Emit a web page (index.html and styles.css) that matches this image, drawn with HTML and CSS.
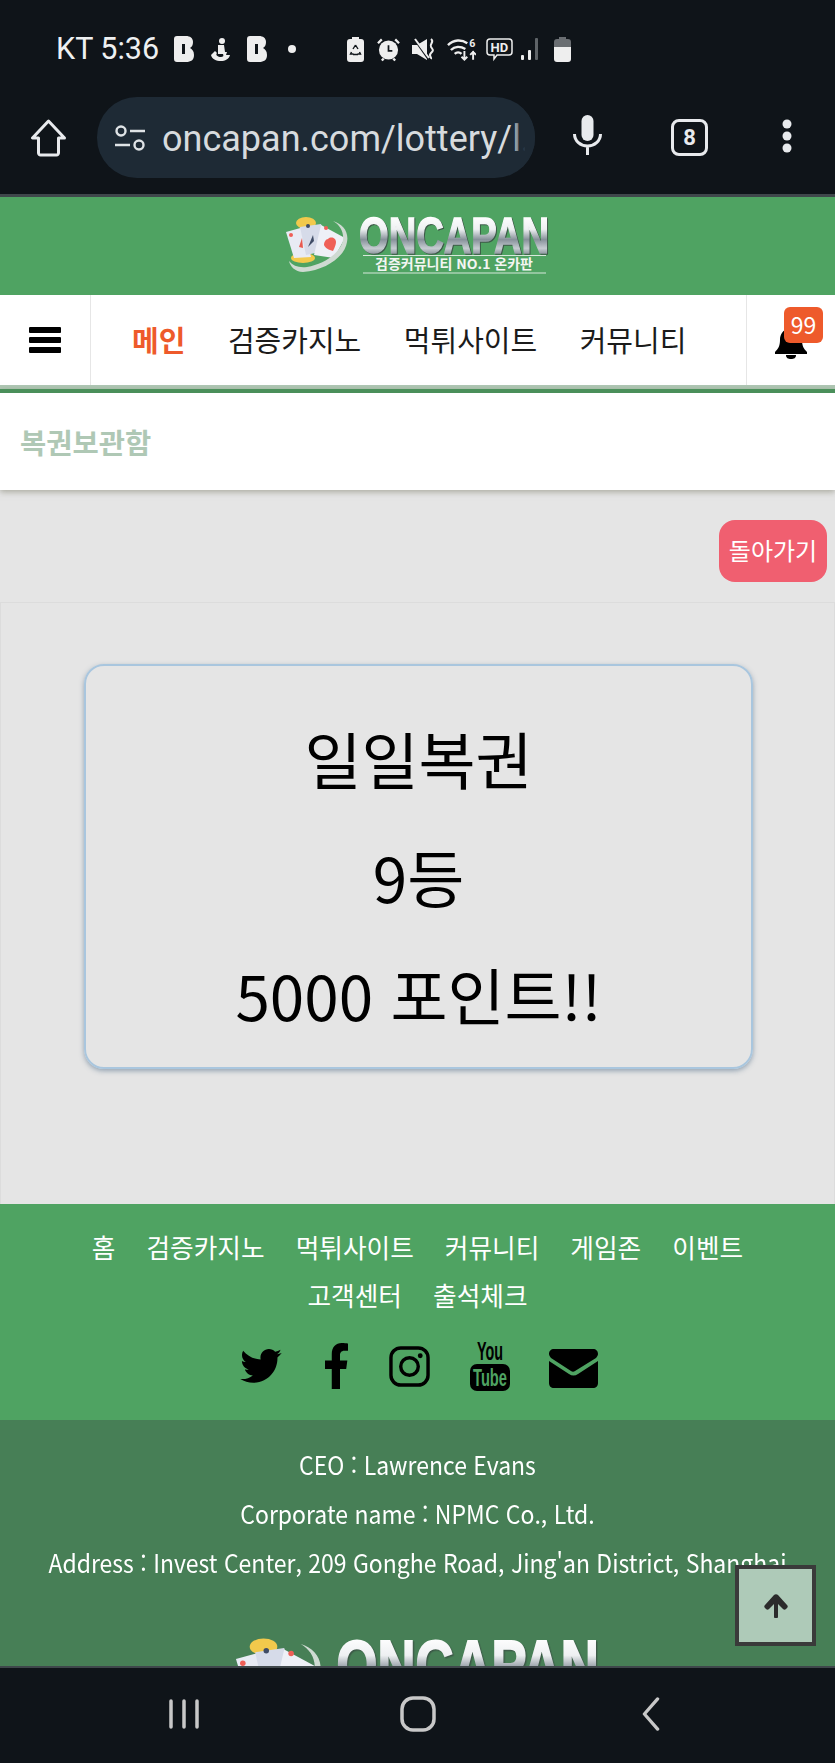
FILE: index.html
```html
<!DOCTYPE html>
<html lang="ko">
<head>
<meta charset="utf-8">
<title>복권보관함</title>
<link rel="stylesheet" href="styles.css">
</head>
<body>
<div class="screen">
  <header class="chrome">
    <div class="status">
      <span class="carrier">KT 5:36</span>
      <span class="notif">
        <svg class="b" viewBox="0 0 20 26"><path fill-rule="evenodd" d="M3 0h9c4 0 7 2 7 6 0 3-1 5-3 6 2 1 4 3 4 7 0 5-3 7-8 7H3c-2 0-3-1-3-3V3c0-2 1-3 3-3zM8 8v10h3V8z"/></svg>
        <svg class="person" viewBox="0 0 21 23"><circle cx="12" cy="3" r="3"/><path d="M8 7h6l1 7h2l-1 3 4 0c-1 4-5 6-9 6-5 0-9-2-10-6l4-4 2 2c-2 2 1 4 4 4 2 0 3-1 2-3H8z"/></svg>
        <svg class="b" viewBox="0 0 20 26"><path fill-rule="evenodd" d="M3 0h9c4 0 7 2 7 6 0 3-1 5-3 6 2 1 4 3 4 7 0 5-3 7-8 7H3c-2 0-3-1-3-3V3c0-2 1-3 3-3zM8 8v10h3V8z"/></svg>
        <i class="dot"></i>
      </span>
      <span class="sysicons">
        <svg width="17" height="25" viewBox="0 0 17 25"><path fill="#eee" d="M5 0h7v2h2c2 0 3 1 3 3v17c0 2-1 3-3 3H3c-2 0-3-1-3-3V5c0-2 1-3 3-3h2z"/><path fill="none" stroke="#10151a" stroke-width="1.400" d="M8.500 8l-2.500 4M8.500 8l2.500 4M4.500 15l-1 2h3M12.500 15l1 2h-3M6 17.500h5"/></svg>
        <svg class="ic-alarm" width="23" height="25" viewBox="0 0 24 25"><circle cx="12" cy="13" r="10" fill="#eee"/><path fill="none" stroke="#10151a" stroke-width="1.800" d="M12 8v6h4"/><path stroke="#eee" stroke-width="2.400" d="M1 6l4-4M23 6l-4-4M5 24l2-2M19 24l-2-2"/></svg>
        <svg width="23" height="25" viewBox="0 0 23 25"><path fill="#eee" d="M0 8h5l10-6v21L5 17H0z"/><path stroke="#10151a" stroke-width="1.500" d="M2 2l14 20"/><path stroke="#eee" stroke-width="2" d="M3 2l14 19"/><path fill="none" stroke="#eee" stroke-width="2" d="M19 2c4 3-2 5 0 8s3 3 0 6 1 4 0 6"/></svg>
        <svg width="29" height="25" viewBox="0 0 30 25"><path fill="none" stroke="#eee" stroke-width="2.500" d="M1 8c6-6 14-6 20-2M4 13c4-4 10-4 15-1M8 17c2-2 5-2 7 0"/><path fill="none" stroke="#eee" stroke-width="2" d="M18 14v9m-3-3 3 3 3-3M27 14v9m-3-5 3-3 3 3"/><text x="23" y="10" class="six">6</text></svg>
        <svg class="ic-hd" width="27" height="25" viewBox="0 0 27 25"><path fill="none" stroke="#eee" stroke-width="1.500" d="M4 2h19c2 0 3 1 3 3v10c0 2-1 3-3 3H11l-3 4v-4H4c-2 0-3-1-3-3V5c0-2 1-3 3-3z"/><text x="4.500" y="15" class="hd">HD</text></svg>
        <svg class="ic-bars" width="22" height="25" viewBox="0 0 22 25"><rect x="1" y="18" width="3" height="5" rx="1" fill="#eee"/><rect x="8" y="13" width="3" height="10" rx="1" fill="#eee"/><rect x="15" y="1" width="3" height="22" rx="1" fill="#5f6468"/></svg>
        <svg width="17" height="25" viewBox="0 0 17 25"><path fill="#6a6e72" d="M5 0h7v2h2c2 0 3 1 3 3v5H0V5c0-2 1-3 3-3h2z"/><path fill="#eee" d="M0 10h17v12c0 2-1 3-3 3H3c-2 0-3-1-3-3z"/></svg>
      </span>
    </div>
    <div class="toolbar">
      <svg class="home" viewBox="0 0 36 38"><path fill="none" stroke="#e8eaed" stroke-width="3" stroke-linejoin="round" d="M18 2 2 19h6v15c0 1 1 2 2 2h16c1 0 2-1 2-2V19h6z"/></svg>
      <div class="omnibox">
        <svg class="tune" viewBox="0 0 32 26"><g fill="none" stroke="#dfe3e6" stroke-width="2.400"><circle cx="7" cy="6" r="4.500"/><path d="M16 6h15M1 20h15"/><circle cx="25" cy="20" r="4.500"/></g></svg>
        <span class="url">oncapan.com/lottery/l.</span><span class="fade"></span>
      </div>
      <svg class="mic" viewBox="0 0 30 40"><rect x="9" y="0" width="12" height="26" rx="6" fill="#e8eaed"/><path fill="none" stroke="#e8eaed" stroke-width="3" d="M2 19c0 7 6 12 13 12s13-5 13-12M15 31v9"/></svg>
      <div class="tabs">8</div>
      <svg class="more" viewBox="0 0 10 34"><circle cx="5" cy="5" r="4.500"/><circle cx="5" cy="17" r="4.500"/><circle cx="5" cy="29" r="4.500"/></svg>
    </div>
  </header>

  <div class="page">
    <div class="site-head">
      <svg class="logo" viewBox="0 0 270 58">
        <defs><linearGradient id="chrome1" gradientUnits="userSpaceOnUse" x1="0" y1="0" x2="0" y2="38"><stop offset="0" stop-color="#fff"/><stop offset=".35" stop-color="#eef0f2"/><stop offset=".62" stop-color="#87919a"/><stop offset=".85" stop-color="#c6ccd1"/><stop offset="1" stop-color="#8d979e"/></linearGradient></defs>
        <ellipse cx="23" cy="7" rx="10" ry="6" fill="#f2c94c"/>
        <ellipse cx="20" cy="42" rx="12" ry="5" fill="#f2c94c"/>
        <path fill="#e8ebf4" d="M3 16 21 11l7 30-17 1z"/>
        <path fill="#d6dbe9" d="M17 11 38 8l8 26-23 5z"/>
        <path fill="#eef0f7" d="M38 9 62 22 51 42 31 39z"/>
        <path fill="#ef5f57" d="M45 23c3-3 8-1 8 3 0 2-1 5-3 9-4-1-8-3-9-6 0-3 2-6 4-6z"/>
        <path fill="#3f4c66" d="M30 19 25 31l6-6z"/>
        <path fill="#e85a50" d="M19 22l-3 9 4 1z"/>
        <circle cx="25" cy="10" r="2" fill="#3f4c66"/><circle cx="43" cy="12" r="2" fill="#ef5f57"/><circle cx="8" cy="19" r="2" fill="#ef5f57"/>
        <path fill="#cfdad2" d="M50 5C60 8 66 16 64 26 62 40 44 54 20 56 12 56 7 50 6 45 10 50 16 52 24 51 42 48 58 36 60 24 61 16 57 9 50 5z"/>
        <text class="logo-name" x="76" y="37" textLength="190" lengthAdjust="spacingAndGlyphs" fill="url(#chrome1)" stroke="url(#chrome1)">ONCAPAN</text>
        <path stroke="#d7e8db" stroke-width="1" d="M80 39.500h183M80 57h183"/>
        <text class="logo-sub" x="92" y="53" textLength="158" lengthAdjust="spacingAndGlyphs">검증커뮤니티 NO.1 온카판</text>
      </svg>
    </div>
    <nav class="gnb">
      <div class="gnb-menu"><svg width="32" height="26" viewBox="0 0 32 26"><path fill="#000" d="M1 0h30c1 0 1 1 1 1v4c0 1-1 1-1 1H1C0 6 0 5 0 5V1c0-1 1-1 1-1zm0 10h30c1 0 1 1 1 1v4c0 1-1 1-1 1H1c-1 0-1-1-1-1v-4c0-1 1-1 1-1zm0 10h30c1 0 1 1 1 1v4c0 1-1 1-1 1H1c-1 0-1-1-1-1v-4c0-1 1-1 1-1z"/></svg></div>
      <ul class="gnb-list">
        <li class="active">메인</li>
        <li>검증카지노</li>
        <li>먹튀사이트</li>
        <li>커뮤니티</li>
      </ul>
      <div class="gnb-bell">
        <svg width="34" height="34" viewBox="0 0 34 34"><path d="M17 1c2 0 3 1 3 3 5 1 8 5 8 11 0 6 2 9 5 12v2H1v-2c3-3 5-6 5-12 0-6 3-10 8-11 0-2 1-3 3-3z"/><path d="M12 30c0 3 2 4 5 4s5-1 5-4z"/></svg>
        <span class="badge">99</span>
      </div>
    </nav>
    <div class="title-bar">복권보관함</div>
    <div class="actions"><a class="back">돌아가기</a></div>
    <section class="panel">
      <div class="card">
        <p>일일복권</p>
        <p>9등</p>
        <p>5000 포인트!!</p>
      </div>
    </section>
    <footer>
      <div class="foot-links">
        <ul class="foot-nav">
          <li>홈</li><li>검증카지노</li><li>먹튀사이트</li><li>커뮤니티</li><li>게임존</li><li>이벤트</li><li>고객센터</li><li>출석체크</li>
        </ul>
        <div class="social">
          <svg class="s-tw" viewBox="0 0 512 420"><path d="M459 105c.3 4.500.3 9.100.3 13.600 0 138.700-105.600 298.600-298.600 298.600-59.500 0-114.700-17.200-161.100-47.100 8.400 1 16.600 1.300 25.300 1.300 49.100 0 94.200-16.600 130.300-44.800-46.100-1-84.800-31.200-98.100-72.800 6.500 1 13 1.600 19.800 1.600 9.400 0 18.800-1.300 27.600-3.600-48.100-9.700-84.100-52-84.100-103v-1.300c14 7.800 30.200 12.700 47.400 13.300-28.300-18.800-46.800-51-46.800-87.400 0-19.500 5.200-37.400 14.300-53 51.700 63.700 129.300 105.300 216.400 109.800-1.600-7.800-2.600-15.900-2.600-24 0-57.800 46.800-104.900 104.900-104.900 30.200 0 57.500 12.700 76.700 33.100 23.700-4.500 46.500-13.300 66.600-25.300-7.800 24-24.400 44.200-46.100 57.200 21.100-2.300 41.600-8.100 60.400-16.200-14.300 20.800-32.200 39.300-52.600 54.300z"/></svg>
          <svg class="s-fb" viewBox="22 0 279 512" preserveAspectRatio="none"><path d="M279 288l14-93h-89v-60c0-25 13-50 53-50h44V6S260 0 225 0c-73 0-121 44-121 125v70H22v93h82v224h100V288z"/></svg>
          <svg class="s-ig" viewBox="0 0 42 42"><rect x="2" y="2" width="38" height="38" rx="10" fill="none" stroke="#000" stroke-width="3.500"/><circle cx="21" cy="21" r="9" fill="none" stroke="#000" stroke-width="3.500"/><circle cx="32" cy="10" r="2.500"/></svg>
          <svg class="s-yt" viewBox="0 0 40 49">
            <text x="7" y="18" textLength="26" lengthAdjust="spacingAndGlyphs" class="yt-you">You</text>
            <rect x="0" y="22" width="40" height="27" rx="7"/>
            <text x="3" y="44" textLength="34" lengthAdjust="spacingAndGlyphs" class="yt-tube">Tube</text>
          </svg>
          <svg class="s-mail" viewBox="0 0 49 39"><path d="M5 0h39c3 0 5 2 5 5 0 1-1 3-2 4L26 22c-1 1-3 1-4 0L2 9C1 8 0 6 0 5c0-3 2-5 5-5z"/><path d="M0 12l20 13c3 2 6 2 9 0l20-13v22c0 3-2 5-5 5H5c-3 0-5-2-5-5z"/></svg>
        </div>
      </div>
      <div class="foot-info">
        <p>CEO : Lawrence Evans</p>
        <p>Corporate name : NPMC Co., Ltd.</p>
        <p>Address : Invest Center, 209 Gonghe Road, Jing'an District, Shanghai</p>
        <svg class="logo foot-logo" viewBox="0 0 270 58">
          <defs><linearGradient id="chrome2" gradientUnits="userSpaceOnUse" x1="0" y1="0" x2="0" y2="38"><stop offset="0" stop-color="#fff"/><stop offset=".35" stop-color="#eef0f2"/><stop offset=".62" stop-color="#87919a"/><stop offset=".85" stop-color="#c6ccd1"/><stop offset="1" stop-color="#8d979e"/></linearGradient></defs>
          <ellipse cx="23" cy="7" rx="10" ry="6" fill="#f2c94c"/>
          <path fill="#e8ebf4" d="M3 16 21 11l7 30-17 1z"/>
          <path fill="#d6dbe9" d="M17 11 38 8l8 26-23 5z"/>
          <path fill="#eef0f7" d="M38 9 62 22 51 42 31 39z"/>
          <circle cx="25" cy="10" r="2" fill="#3f4c66"/><circle cx="43" cy="12" r="2" fill="#ef5f57"/><circle cx="8" cy="19" r="2" fill="#ef5f57"/>
          <path fill="#cfdad2" d="M50 5C60 8 66 16 64 26 62 40 44 54 20 56 12 56 7 50 6 45 10 50 16 52 24 51 42 48 58 36 60 24 61 16 57 9 50 5z"/>
          <text class="logo-name" x="76" y="37" textLength="190" lengthAdjust="spacingAndGlyphs" fill="url(#chrome2)" stroke="url(#chrome2)">ONCAPAN</text>
        </svg>
      </div>
    </footer>
    <button class="to-top" aria-label="맨 위로"><svg width="26" height="25" viewBox="0 0 24 25"><path fill="#2b2b2b" d="M10 24V11l-5 5c-1 1-2 1-3 0l-1-1c-1-1-1-2 0-3L10 2c1-1 3-1 4 0l9 10c1 1 1 2 0 3l-1 1c-1 1-2 1-3 0l-5-5v13c0 1-1 1-2 1h-1c0 0-1 0-1-1z"/></svg></button>
  </div>

  <div class="navbar">
    <svg class="nav-recent" viewBox="0 0 32 30"><path stroke="#c8c8c8" stroke-width="3.500" stroke-linecap="round" d="M3 2v26M16 2v26M29 2v26"/></svg>
    <svg class="nav-home" viewBox="0 0 36 36"><rect x="2" y="2" width="32" height="32" rx="11" fill="none" stroke="#c8c8c8" stroke-width="3.500"/></svg>
    <svg class="nav-back" viewBox="0 0 20 36"><path fill="none" stroke="#c8c8c8" stroke-width="3.500" stroke-linecap="round" stroke-linejoin="round" d="M17 2 3 18l14 16"/></svg>
  </div>
</div>
</body>
</html>
```
FILE: styles.css
```css
* { box-sizing: border-box; }
html, body { margin: 0; padding: 0; }
body { font-family: "Noto Sans CJK KR", "Noto Sans", sans-serif; background: #0f1419; }
ul { list-style: none; margin: 0; padding: 0; }
p { margin: 0; }
svg { display: block; flex: none; }

.screen { width: 835px; height: 1763px; display: flex; flex-direction: column; overflow: hidden; }

.chrome { height: 197px; flex: none; background: #0f1419; border-bottom: 3px solid #3f474b; color: #e8eaed; }
.status { height: 95px; padding: 34px 0 0 56px; display: flex; align-items: flex-start; font-family: "Roboto", sans-serif; }
.carrier { font-size: 30.500px; line-height: 30px; color: #eef0f1; width: 118px; white-space: nowrap; }
.notif { display: flex; align-items: center; height: 30px; gap: 16px; width: 173px; }
.notif svg { fill: #eee; }
.b { width: 20px; height: 26px; }
.person { width: 21px; height: 23px; }
.dot { width: 8px; height: 8px; border-radius: 50%; background: #eee; margin-left: 5px; }
.sysicons { display: flex; gap: 12px; height: 30px; align-items: center; }
.ic-alarm { margin-left: 1px; }
.ic-hd { margin-left: -2px; }
.ic-bars { margin-left: -5px; }
.six { font: 700 11px "Roboto", sans-serif; fill: #eee; }
.hd { font: 700 13px "Roboto", sans-serif; fill: #eee; }

.toolbar { height: 99px; display: flex; align-items: flex-start; }
.home { width: 37px; height: 38px; margin: 24px 0 0 30px; }
.omnibox { width: 438px; height: 81px; margin: 2px 0 0 30px; background: #1e2a35; border-radius: 40px; display: flex; align-items: center; padding-left: 17px; position: relative; overflow: hidden; }
.tune { width: 32px; height: 26px; }
.url { font-family: "Roboto", sans-serif; font-size: 36px; color: #d7dbde; margin-left: 16px; white-space: nowrap; position: relative; top: 1px; }
.fade { position: absolute; right: 0; top: 0; bottom: 0; width: 24px; background: linear-gradient(to right, rgba(30,42,53,0), #1e2a35 60%); }
.mic { width: 31px; height: 40px; margin: 20px 0 0 37px; }
.tabs { width: 37px; height: 37px; margin: 24px 0 0 68px; border: 3.500px solid #e8eaed; border-radius: 8px; display: flex; align-items: center; justify-content: center; font: 700 22px "Roboto", sans-serif; color: #e8eaed; }
.more { width: 10px; height: 34px; margin: 24px 0 0 74px; fill: #e8eaed; }

.page { flex: 1; min-height: 0; position: relative; overflow: hidden; background: #e5e5e5; display: flex; flex-direction: column; }

.site-head { height: 98px; flex: none; background: #4fa362; display: flex; justify-content: center; align-items: flex-start; padding-top: 19px; }
.logo { width: 270px; height: 58px; overflow: visible; }
.logo-name { font-family: "Liberation Sans", sans-serif; font-weight: 700; font-size: 50px; stroke-width: 1.500px; filter: drop-shadow(1px 1px 0 #3d5a48); }
.logo-sub { font-family: "Noto Sans CJK KR", sans-serif; font-weight: 700; font-size: 13.500px; fill: #f3f6f3; }

.gnb { height: 94px; flex: none; display: flex; background: #fff; border-bottom: 4px solid #afc7b4; }
.gnb-menu { width: 91px; border-right: 1px solid #e6e6e6; display: flex; align-items: center; justify-content: center; }
.gnb-list { flex: 1; display: flex; padding: 0 0 2px 41px; gap: 42.500px; align-items: center; font-size: 29px; color: #1b1b1b; }
.gnb-list li { white-space: nowrap; line-height: 40px; }
.gnb-list .active { color: #ee5a2b; font-weight: 700; }
.gnb-bell { width: 89px; border-left: 1px solid #e6e6e6; position: relative; }
.gnb-bell svg { position: absolute; left: 27px; top: 30px; }
.badge { position: absolute; left: 37px; top: 12px; width: 39px; height: 36px; border-radius: 6px; background: #ee5a2b; color: #fff; font-size: 23px; line-height: 34px; text-align: center; }

.title-bar { height: 101px; flex: none; background: #fff; border-top: 4px solid #4a8f5a; padding: 29px 0 0 20px; font-size: 28.500px; font-weight: 700; line-height: 40px; color: #afc8b5; box-shadow: 0 2px 6px rgba(120,120,100,.55); position: relative; }

.actions { height: 112px; flex: none; display: flex; justify-content: flex-end; padding: 30px 8px 0 0; }
.back { width: 108px; height: 62px; background: #f05f70; border-radius: 16px; color: #fff; font-size: 24px; line-height: 60px; text-align: center; white-space: nowrap; }

.panel { height: 602px; flex: none; border: 1px solid #dcdcdc; border-bottom: 0; padding: 61px 81px 0 83px; }
.card { height: 405px; border: 2px solid #a9c6de; border-radius: 20px; box-shadow: 0 2px 5px rgba(70,100,130,.5); text-align: center; color: #000; padding-top: 33px; font-size: 62px; }
.card p { line-height: 118px; height: 118px; white-space: nowrap; }

footer { flex: none; }
.foot-links { height: 216px; background: #4fa362; padding-top: 19px; }
.foot-nav { display: flex; flex-wrap: wrap; justify-content: center; gap: 0 31px; padding: 0 80px; color: #fff; font-size: 25.700px; line-height: 48px; }
.foot-nav li { white-space: nowrap; }
.social { display: flex; justify-content: center; align-items: center; margin-top: 22px; height: 50px; padding-left: 3px; }
.s-tw { width: 42px; height: 34px; margin-right: 43px; }
.s-fb { width: 23px; height: 46px; margin-right: 41px; }
.s-ig { width: 41px; height: 41px; margin-right: 40px; }
.s-yt { width: 40px; height: 49px; margin-right: 39px; overflow: visible; }
.s-mail { width: 49px; height: 39px; margin-top: 5px; }
.yt-you { font: 700 25px "Liberation Sans", sans-serif; }
.yt-tube { font: 700 24px "Liberation Sans", sans-serif; fill: #4fa362; }

.foot-info { background: #477f56; color: #fff; text-align: center; font-size: 25px; line-height: 49px; padding-top: 20px; height: 246px; overflow: hidden; }
.foot-info p { white-space: nowrap; transform: scaleX(.92); }
.foot-logo { width: 374px; height: 80px; margin: 50px auto 0; }

.to-top { position: absolute; left: 735px; top: 1368px; width: 81px; height: 81px; background: #aecab8; border: 4px solid #3a3a3a; padding: 0; display: flex; align-items: center; justify-content: center; }

.navbar { height: 97px; flex: none; background: #0f1419; border-top: 2px solid #3f474b; display: flex; align-items: center; padding-bottom: 3px; }
.nav-recent { width: 32px; height: 30px; margin-left: 168px; }
.nav-home { width: 36px; height: 36px; margin-left: 200px; }
.nav-back { width: 20px; height: 34px; margin-left: 205px; }
```
